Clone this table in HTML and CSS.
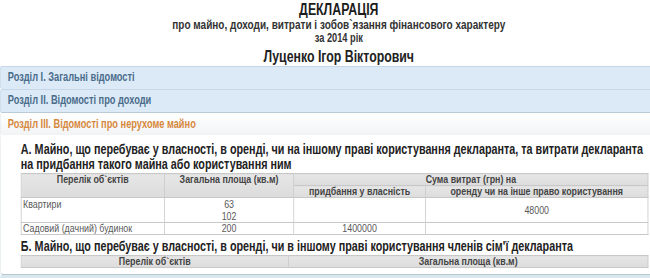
FILE: index.html
```html
<!DOCTYPE html>
<html lang="uk">
<head>
<meta charset="utf-8">
<title>Декларація</title>
<link rel="stylesheet" href="styles.css">
</head>
<body>
<div class="page">
  <header class="decl-head">
    <h1 class="decl-title">ДЕКЛАРАЦІЯ</h1>
    <p class="decl-sub decl-sub-main">про майно, доходи, витрати і зобов`язання фінансового характеру</p>
    <p class="decl-sub">за 2014 рік</p>
    <h2 class="decl-name">Луценко Ігор Вікторович</h2>
  </header>
  <div class="accordion">
    <div class="acc-head acc-first">Розділ I. Загальні відомості</div>
    <div class="acc-head acc-second">Розділ II. Відомості про доходи</div>
    <div class="acc-head acc-active">Розділ III. Відомості про нерухоме майно</div>
    <div class="acc-body">
      <h3 class="sec-title">А. Майно, що перебуває у власності, в оренді, чи на іншому праві користування декларанта, та витрати декларанта<br>на придбання такого майна або користування ним</h3>
      <table class="grid grid-a">
        <colgroup><col class="c1"><col class="c2"><col class="c3"><col class="c4"></colgroup>
        <thead>
          <tr>
            <th rowspan="2" class="th-top">Перелік об`єктів</th>
            <th rowspan="2" class="th-top">Загальна площа (кв.м)</th>
            <th colspan="2">Сума витрат (грн) на</th>
          </tr>
          <tr>
            <th>придбання у власність</th>
            <th>оренду чи на інше право користування</th>
          </tr>
        </thead>
        <tbody>
          <tr class="row-tall">
            <td class="name">Квартири</td>
            <td class="num">63<br>102</td>
            <td class="num"></td>
            <td class="num">48000</td>
          </tr>
          <tr>
            <td class="name">Садовий (дачний) будинок</td>
            <td class="num">200</td>
            <td class="num">1400000</td>
            <td class="num"></td>
          </tr>
        </tbody>
      </table>
      <h3 class="sec-title sec-b">Б. Майно, що перебуває у власності, в оренді, чи в іншому праві користування членів сім'ї декларанта</h3>
      <table class="grid grid-b">
        <colgroup><col class="b1"><col class="b2"></colgroup>
        <thead>
          <tr>
            <th>Перелік об`єктів</th>
            <th>Загальна площа (кв.м)</th>
          </tr>
        </thead>
      </table>
    </div>
    <div class="acc-head acc-next"></div>
  </div>
</div>
</body>
</html>
```
FILE: styles.css
```css
html, body {
  margin: 0;
  padding: 0;
  background: #ffffff;
  overflow: hidden;
}

body {
  font-family: "Liberation Sans", Arial, sans-serif;
  color: #222;
}

.page {
  width: 880px;
  transform: scaleX(0.77);
  transform-origin: 0 0;
}

/* Header */
.decl-head {
  text-align: center;
  padding-top: 1px;
}

.decl-title {
  margin: 0;
  font-size: 16px;
  line-height: 17px;
  font-weight: bold;
  color: #1c1c1c;
}

.decl-sub {
  margin: 0;
  font-size: 12px;
  line-height: 12px;
  font-weight: bold;
  color: #333;
}

.decl-sub-main {
  font-size: 13px;
  line-height: 14px;
}

.decl-name {
  margin: 4px 0 0;
  font-size: 16px;
  line-height: 18px;
  font-weight: bold;
  color: #222;
}

/* Accordion */
.acc-head {
  box-sizing: border-box;
  height: 23px;
  line-height: 21px;
  padding-left: 9px;
  font-size: 12px;
  font-weight: bold;
  color: #4a6c8b;
  background: #dceaf7;
  border: 1px solid #c9dae8;
  border-bottom: none;
  border-top-color: #c6d8e8;
  border-radius: 3px 0 0 3px;
}

.acc-second {
  height: 24px;
  border-bottom: 1px solid #b9cad5;
}

.acc-active {
  height: 22px;
  line-height: 22px;
  color: #d6883d;
  border: none;
  border-left: 1px solid #e6ecef;
  background: linear-gradient(#ffffff, #f1f4f5);
}

.acc-body {
  padding: 7px 40px 6px 26px;
  background: #ffffff;
  border-left: 1px solid #e6ecef;
  border-bottom: 1px solid #b4c6cf;
  border-radius: 0 0 0 4px;
}

.acc-next {
  height: 10px;
  background: #d9e7ef;
  border: none;
  border-radius: 3px 0 0 0;
}

/* Section titles */
.sec-title {
  margin: 0;
  font-size: 14px;
  line-height: 15px;
  font-weight: bold;
  color: #222;
}

.sec-b {
  margin-top: 4px;
}

/* Tables */
.grid {
  border-collapse: collapse;
  table-layout: fixed;
  width: 814px;
  margin-top: 1px;
}

.c1 { width: 186px; }
.c2 { width: 168px; }
.c3 { width: 171px; }
.c4 { width: 289px; }
.b1 { width: 347px; }
.b2 { width: 467px; }

.grid th,
.grid td {
  border: 1px solid #c8c8c8;
  padding: 0 4px;
  height: 11px;
  line-height: 11px;
  white-space: nowrap;
}

.grid th {
  background: linear-gradient(#e6e6e6, #dcdcdc);
  font-size: 11.5px;
  font-weight: bold;
  color: #444;
  text-align: center;
  vertical-align: top;
}

.grid td {
  font-size: 11.5px;
  color: #5a5a5a;
  vertical-align: middle;
}

.grid td.name {
  text-align: left;
  vertical-align: top;
  padding-left: 2px;
}

.grid td.num {
  text-align: center;
}

.row-tall td {
  line-height: 12px;
}
```
